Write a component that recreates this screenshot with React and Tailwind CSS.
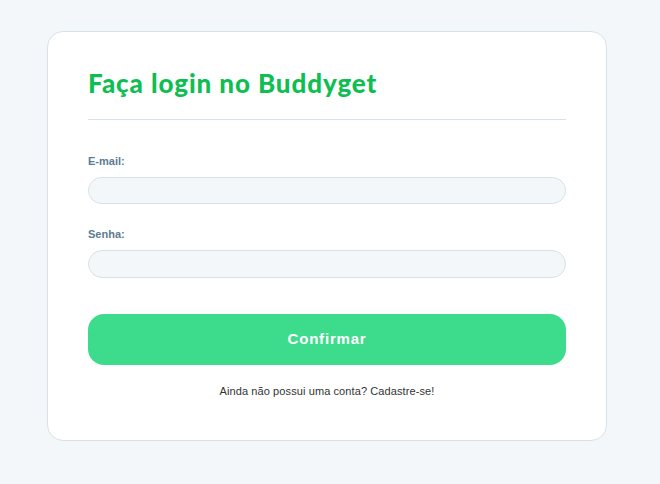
export default function App() {
    return (
        <div className="min-h-[484px] w-full bg-[#f3f7fa] pt-[31px] pl-[47px] font-['Liberation_Sans',Arial,sans-serif]">
            <div className="w-[560px] h-[410px] bg-white border border-[#d5e3e8] rounded-[16px] px-[40px] pt-[34px]">
                <h1 className="font-['Lato',sans-serif] font-black text-[26px] leading-[34px] text-[#0fbe52] tracking-[0.9px]">
                    Faça login no Buddyget
                </h1>
                <div className="mt-[19px] h-px bg-[#d5e3e8]" />

                <form className="mt-[34px] flex flex-col">
                    <label className="text-[11px] font-bold text-[#5d7b92] leading-[14px]">E-mail:</label>
                    <input
                        type="email"
                        className="mt-[9px] h-[27px] rounded-full bg-[#f3f7fa] border border-[#d5e3e8] outline-none px-3"
                    />

                    <label className="mt-[23px] text-[11px] font-bold text-[#5d7b92] leading-[14px]">Senha:</label>
                    <input
                        type="password"
                        className="mt-[9px] h-[28px] rounded-full bg-[#f3f7fa] border border-[#d5e3e8] outline-none px-3"
                    />

                    <button
                        type="button"
                        className="mt-[36px] h-[51px] rounded-[16px] bg-[#3ddc8c] text-white font-bold text-[15px] tracking-[0.8px]"
                    >
                        Confirmar
                    </button>

                    <p className="mt-[18px] text-center text-[11px] text-[#333333] tracking-[0.1px]">
                        Ainda não possui uma conta? Cadastre-se!
                    </p>
                </form>
            </div>
        </div>
    );
}
